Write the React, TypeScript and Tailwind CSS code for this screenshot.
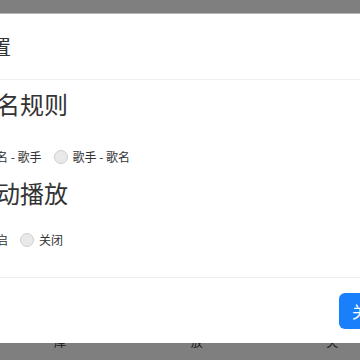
import React from 'react';

const font = { fontFamily: '"Noto Sans CJK SC", "Noto Sans", sans-serif' };

function Radio({ label }: { label: string }) {
  return (
    <label className="flex items-center gap-[5px] text-[12px] leading-5 text-[#333]">
      <span className="w-[14px] h-[14px] rounded-full border border-[#cfcfcf] bg-[#e9e9e9] shrink-0" />
      {label}
    </label>
  );
}

export default function App() {
  return (
    <div className="relative w-[360px] h-[360px] overflow-hidden bg-white" style={font}>
      {/* page underneath */}
      <div className="flex flex-col h-full">
        <div className="flex-1" />
        <nav className="flex items-end pb-[10px] text-[12px] leading-4 text-[#333]">
          <span className="ml-[54px]">歌曲库</span>
          <span className="ml-[103px]">播放</span>
          <span className="ml-[113px]">收藏夹</span>
        </nav>
      </div>

      {/* overlay */}
      <div className="absolute inset-0 bg-black/50" />

      {/* dialog */}
      <div className="absolute left-[-46px] top-[13px] w-[480px] h-[330px] bg-white border-t border-[#b4b4b4] flex flex-col text-[#333]">
        <div className="h-[66px] flex items-center px-4 border-b border-[#f0f0f0]">
          <h1 className="text-[20px] leading-7 pl-[1px]">设置</h1>
        </div>

        <div className="flex-1 px-4 pt-2 border-b border-[#f0f0f0]">
          <h2 className="text-[24px] leading-8 pl-[2px]">命名规则</h2>
          <div className="flex items-center gap-3 mt-[27px] ml-[-5px]">
            <Radio label="歌名 - 歌手" />
            <Radio label="歌手 - 歌名" />
          </div>

          <h2 className="text-[24px] leading-8 pl-[2px] mt-[10px]">自动播放</h2>
          <div className="flex items-center gap-3 mt-[21px] ml-[-5px]">
            <Radio label="开启" />
            <Radio label="关闭" />
          </div>
        </div>

        <div className="h-[65px] flex items-center justify-end pr-[37px]">
          <button className="h-9 px-[13px] rounded-md bg-[#1a7ffb] text-white text-[16px] leading-6">
            关闭
          </button>
        </div>
      </div>
    </div>
  );
}
